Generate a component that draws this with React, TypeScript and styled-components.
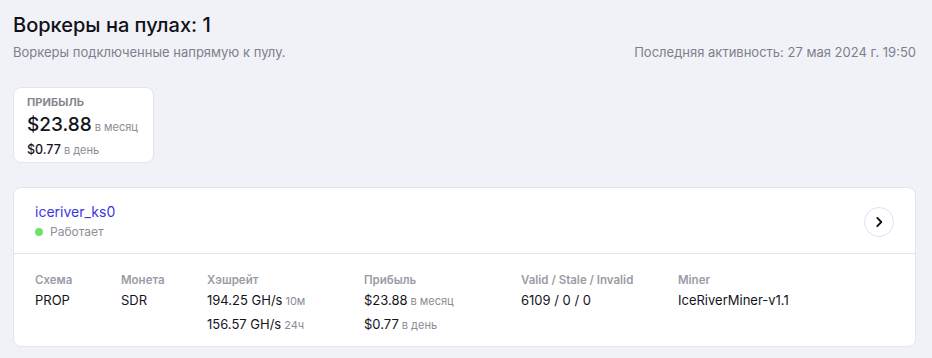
import React from 'react';
import styled, { createGlobalStyle } from 'styled-components';

const GlobalStyle = createGlobalStyle`
  html, body {
    margin: 0;
    padding: 0;
    background: #f1f2f7;
    font-family: Inter, 'Noto Sans', sans-serif;
    color: #14141c;
  }
`;

const Page = styled.div`
  padding: 12px 16px 12px 13px;
`;

const Title = styled.h1`
  margin: 0;
  font-size: 20px;
  font-weight: 500;
  line-height: 26px;
  color: #111118;
`;

const SubRow = styled.div`
  display: flex;
  justify-content: space-between;
  align-items: center;
  margin-top: 5px;
  font-size: 13px;
  line-height: 18px;
  color: #7d808c;
`;

const ProfitCard = styled.div`
  margin-top: 26px;
  width: 141px;
  box-sizing: border-box;
  background: #fff;
  border: 1px solid #e3e4ee;
  border-radius: 8px;
  padding: 7px 13px 3px 13px;
`;

const Caps = styled.div`
  font-size: 11px;
  font-weight: 700;
  color: #85878f;
  letter-spacing: 0.1px;
  line-height: 14px;
`;

const BigValue = styled.div`
  font-size: 19px;
  font-weight: 500;
  line-height: 24px;
  margin-top: 4px;
`;

const SmallValue = styled.div`
  font-size: 12.5px;
  font-weight: 500;
  line-height: 18px;
  margin-top: 2px;
`;

const Unit = styled.span<{ $size?: number }>`
  font-size: ${p => p.$size || 11}px;
  font-weight: 400;
  color: #8a8c95;
  margin-left: 3px;
`;

const WorkerCard = styled.div`
  margin-top: 24px;
  background: #fff;
  border: 1px solid #e3e4ee;
  border-radius: 8px;
`;

const WorkerHead = styled.div`
  display: flex;
  align-items: center;
  justify-content: space-between;
  padding: 15px 21px 13px 21px;
  border-bottom: 1px solid #e3e4ee;
`;

const WorkerName = styled.div`
  font-size: 14px;
  line-height: 18px;
  color: #3a36e0;
`;

const Status = styled.div`
  display: flex;
  align-items: center;
  gap: 7px;
  margin-top: 3px;
  font-size: 12px;
  line-height: 16px;
  color: #8d8f98;
`;

const Dot = styled.span`
  width: 8px;
  height: 8px;
  border-radius: 50%;
  background: #6ee26a;
`;

const RoundButton = styled.button`
  width: 30px;
  height: 30px;
  border-radius: 50%;
  border: 1px solid #e0defa;
  background: #fff;
  display: flex;
  align-items: center;
  justify-content: center;
  padding: 0;
  cursor: pointer;
`;

const StatsGrid = styled.div`
  display: grid;
  grid-template-columns: 86px 86px 157px 157px 157px 1fr;
  padding: 18px 21px 9px 21px;
`;

const Column = styled.div`
  display: flex;
  flex-direction: column;
`;

const Label = styled.div`
  font-size: 11.5px;
  font-weight: 600;
  color: #9a9ca5;
  line-height: 16px;
  margin-bottom: 1px;
`;

const Value = styled.div`
  font-size: 13px;
  line-height: 23px;
  color: #14141c;
`;

const stats = [
  { label: 'Схема', values: [['PROP']] },
  { label: 'Монета', values: [['SDR']] },
  { label: 'Хэшрейт', values: [['194.25 GH/s', '10м'], ['156.57 GH/s', '24ч']] },
  { label: 'Прибыль', values: [['$23.88', 'в месяц'], ['$0.77', 'в день']] },
  { label: 'Valid / Stale / Invalid', values: [['6109 / 0 / 0']] },
  { label: 'Miner', values: [['IceRiverMiner-v1.1']] },
];

export default function App() {
  return (
    <>
      <GlobalStyle />
      <Page>
        <Title>Воркеры на пулах: 1</Title>
        <SubRow>
          <span>Воркеры подключенные напрямую к пулу.</span>
          <span>Последняя активность: 27 мая 2024 г. 19:50</span>
        </SubRow>

        <ProfitCard>
          <Caps>ПРИБЫЛЬ</Caps>
          <BigValue>
            $23.88<Unit $size={11}>в месяц</Unit>
          </BigValue>
          <SmallValue>
            $0.77<Unit $size={11}>в день</Unit>
          </SmallValue>
        </ProfitCard>

        <WorkerCard>
          <WorkerHead>
            <div>
              <WorkerName>iceriver_ks0</WorkerName>
              <Status>
                <Dot />
                Работает
              </Status>
            </div>
            <RoundButton>
              <svg width="14" height="14" viewBox="0 0 24 24" fill="none" stroke="#111" strokeWidth="3.2" strokeLinecap="round" strokeLinejoin="round">
                <path d="M9 5l7 7-7 7" />
              </svg>
            </RoundButton>
          </WorkerHead>
          <StatsGrid>
            {stats.map(s => (
              <Column key={s.label}>
                <Label>{s.label}</Label>
                {s.values.map(([v, u]) => (
                  <Value key={v}>
                    {v}
                    {u && <Unit $size={11}>{u}</Unit>}
                  </Value>
                ))}
              </Column>
            ))}
          </StatsGrid>
        </WorkerCard>
      </Page>
    </>
  );
}
